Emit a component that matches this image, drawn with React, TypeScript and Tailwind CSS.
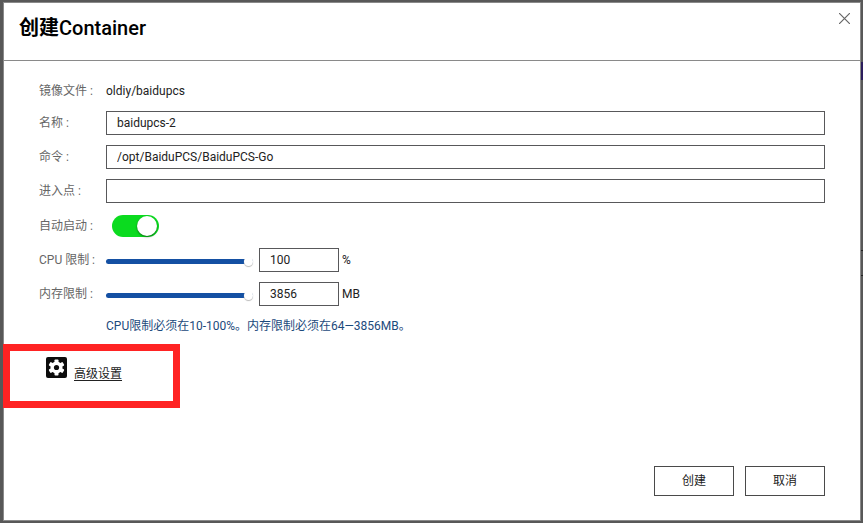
import { useState } from "react";
import type { ReactNode } from "react";

const inputClass =
  "h-6 rounded-none border border-[#58585a] bg-white px-2.5 text-xs text-[#222] outline-none";

const sliderClass =
  "h-[9px] w-[147px] shrink-0 cursor-pointer appearance-none bg-transparent outline-none [&::-webkit-slider-runnable-track]:h-[5px] [&::-webkit-slider-runnable-track]:rounded-sm [&::-webkit-slider-runnable-track]:bg-[#1450a3] [&::-webkit-slider-thumb]:-mt-0.5 [&::-webkit-slider-thumb]:size-[9px] [&::-webkit-slider-thumb]:appearance-none [&::-webkit-slider-thumb]:rounded-full [&::-webkit-slider-thumb]:bg-white [&::-webkit-slider-thumb]:shadow-[0_1px_1px_#bbb]";

const buttonClass =
  "h-[30px] w-20 cursor-pointer border border-[#4a4a4a] bg-white text-xs text-[#222] hover:bg-gray-100";

type RowProps = {
  label: string;
  htmlFor: string;
  children: ReactNode;
};

function Row({ label, htmlFor, children }: RowProps) {
  return (
    <div className="flex h-6 items-center">
      <label htmlFor={htmlFor} className="w-[67px] shrink-0 whitespace-nowrap text-[#666]">
        {label} :
      </label>
      {children}
    </div>
  );
}

type LimitProps = {
  id: string;
  label: string;
  unit: string;
  min: number;
  max: number;
};

function LimitRow({ id, label, unit, min, max }: LimitProps) {
  const [value, setValue] = useState(max);

  return (
    <Row label={label} htmlFor={id}>
      <input
        type="range"
        aria-label={label}
        min={min}
        max={max}
        value={value}
        onChange={(e) => setValue(Number(e.target.value))}
        className={`mt-0.5 ${sliderClass}`}
      />
      <input
        id={id}
        type="text"
        value={value}
        onChange={(e) => setValue(Number(e.target.value) || min)}
        className={`ml-1.5 w-20 ${inputClass}`}
      />
      <span className="ml-[3px]">{unit}</span>
    </Row>
  );
}

export default function App() {
  const [name, setName] = useState("baidupcs-2");
  const [command, setCommand] = useState("/opt/BaiduPCS/BaiduPCS-Go");
  const [entrypoint, setEntrypoint] = useState("");
  const [autoStart, setAutoStart] = useState(true);

  return (
    <div className="relative flex min-h-screen bg-[#585858] pt-0.5 pr-0.5 pb-0.5 pl-[3px] font-['Roboto','Noto_Sans_CJK_SC',sans-serif] text-xs text-[#222]">
      {/* Edge of the page behind the dialog */}
      <div className="absolute top-[62px] right-0 h-[18px] w-0.5 bg-[#2b1d5c]" />
      <div className="absolute top-[250px] right-0 h-[26px] w-0.5 border-y border-[#222]" />

      <div
        role="dialog"
        aria-labelledby="dialog-title"
        className="flex flex-1 flex-col border border-[#8a8a8a] bg-white"
      >
        <header className="flex h-[58px] shrink-0 items-start justify-between border-b border-[#8a8a8a] pt-2.5 pr-2.5 pl-[15px]">
          <h1 id="dialog-title" className="text-xl leading-[30px] font-medium text-black">
            <span className="font-bold">创建</span>Container
          </h1>
          <button type="button" aria-label="关闭" className="cursor-pointer">
            <svg width="11" height="11" viewBox="0 0 11 11" stroke="#666" strokeWidth="1.2">
              <path d="M0 0l11 11M11 0L0 11" />
            </svg>
          </button>
        </header>

        <form className="flex flex-1 flex-col pt-[18px]" onSubmit={(e) => e.preventDefault()}>
          <div className="flex flex-col gap-2.5 px-[35px]">
            <div className="-mb-0.5 flex h-6 items-center">
              <span className="w-[67px] shrink-0 text-[#666]">镜像文件 :</span>
              <span>oldiy/baidupcs</span>
            </div>
            <Row label="名称" htmlFor="name">
              <input
                id="name"
                type="text"
                value={name}
                onChange={(e) => setName(e.target.value)}
                className={`min-w-0 flex-1 ${inputClass}`}
              />
            </Row>
            <Row label="命令" htmlFor="command">
              <input
                id="command"
                type="text"
                value={command}
                onChange={(e) => setCommand(e.target.value)}
                className={`min-w-0 flex-1 ${inputClass}`}
              />
            </Row>
            <Row label="进入点" htmlFor="entrypoint">
              <input
                id="entrypoint"
                type="text"
                value={entrypoint}
                onChange={(e) => setEntrypoint(e.target.value)}
                className={`min-w-0 flex-1 ${inputClass}`}
              />
            </Row>
          </div>

          <div className="mt-[11px] flex flex-col gap-2.5 px-[35px]">
            <Row label="自动启动" htmlFor="auto-start">
              <input
                id="auto-start"
                type="checkbox"
                role="switch"
                checked={autoStart}
                onChange={(e) => setAutoStart(e.target.checked)}
                className="ml-1.5 flex h-[22px] w-[47px] cursor-pointer appearance-none items-center rounded-full bg-gray-300 px-0.5 before:size-5 before:rounded-full before:bg-white before:shadow-[0_1px_2px_rgba(0,0,0,0.5)] checked:justify-end checked:bg-[#0bdb1f]"
              />
            </Row>
            <LimitRow id="cpu-limit" label="CPU 限制" unit="%" min={10} max={100} />
            <LimitRow id="memory-limit" label="内存限制" unit="MB" min={64} max={3856} />
            <p className="-mt-0.5 pl-[67px] leading-6 text-[#1c4a7c]">
              CPU限制必须在10-100%。内存限制必须在64—3856MB。
            </p>
          </div>

          {/* Highlighted link to the advanced settings */}
          <div className="mt-1.5 -ml-px flex h-16 w-[177px] items-start border-[7px] border-[#ff2323] pt-1.5 pl-9">
            <svg width="21" height="21" viewBox="0 0 21 21" className="shrink-0">
              <rect width="21" height="21" rx="2" fill="#0c0c0c" />
              <g fill="#fff">
                <circle cx="10.5" cy="10.5" r="6" />
                <rect x="8.5" y="2.5" width="4" height="16" rx=".8" />
                <rect x="8.5" y="2.5" width="4" height="16" rx=".8" transform="rotate(60 10.5 10.5)" />
                <rect x="8.5" y="2.5" width="4" height="16" rx=".8" transform="rotate(120 10.5 10.5)" />
              </g>
              <circle cx="10.5" cy="10.5" r="2.6" fill="#0c0c0c" />
            </svg>
            <a href="#advanced" className="mt-[9px] ml-[7px] text-[#222] underline underline-offset-2">
              高级设置
            </a>
          </div>

          <footer className="mt-auto flex justify-end gap-[11px] pr-[35px] pb-6">
            <button type="submit" className={buttonClass}>
              创建
            </button>
            <button type="button" className={buttonClass}>
              取消
            </button>
          </footer>
        </form>
      </div>
    </div>
  );
}
